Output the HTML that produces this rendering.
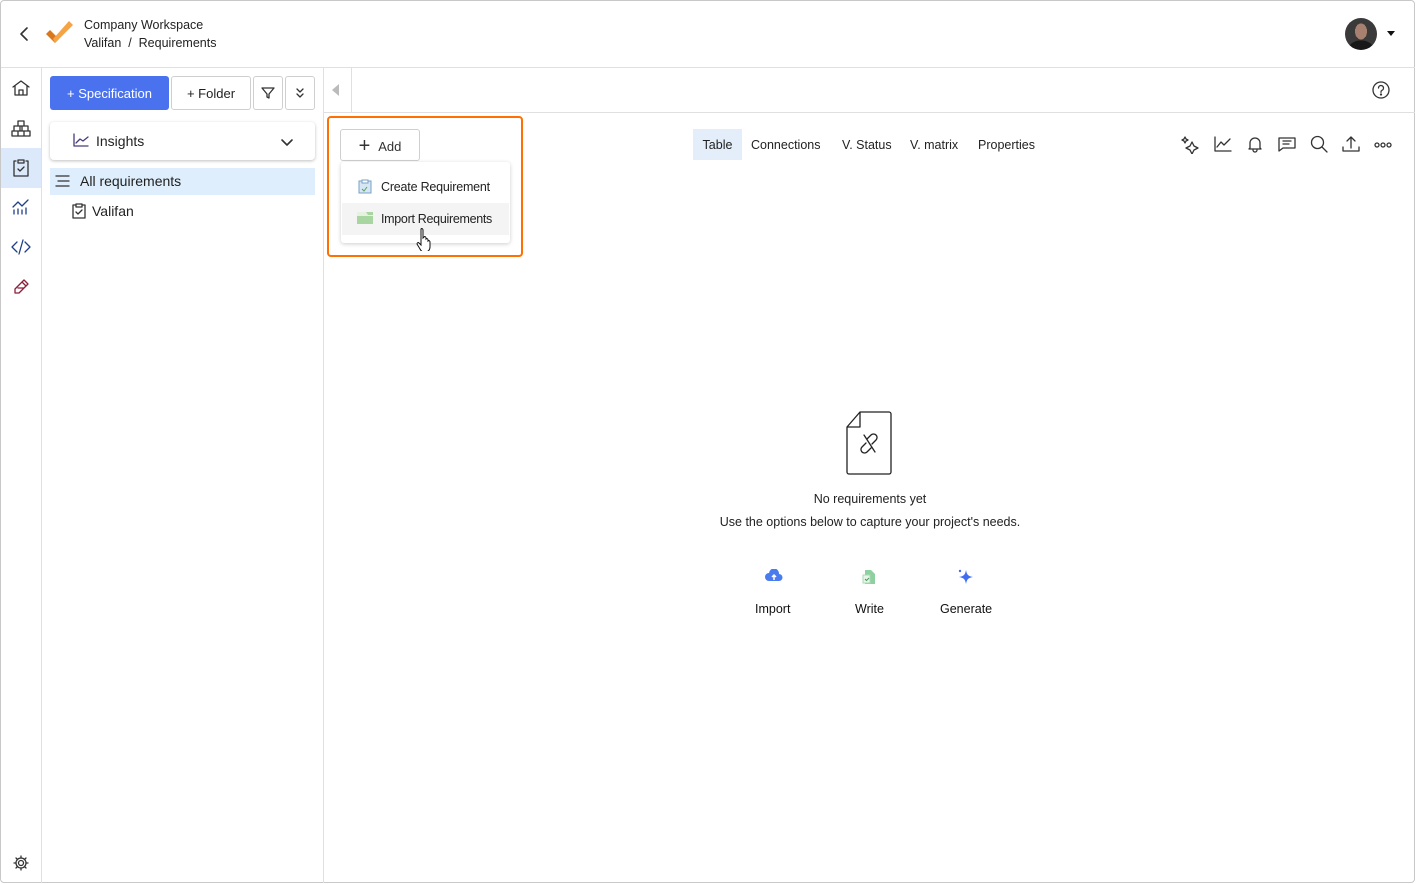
<!DOCTYPE html>
<html><head><style>
*{box-sizing:border-box;margin:0;padding:0}
body{width:1416px;height:884px;overflow:hidden;background:#fff;font-family:"Liberation Sans",sans-serif;color:#1f1f1f;position:relative}
.frame{position:absolute;left:0;top:0;width:1415px;height:883px;border:1px solid #c8c8c8;border-radius:4px}
.a{position:absolute}
.ic{position:absolute;fill:none;stroke:#333;stroke-width:1.3;stroke-linecap:round;stroke-linejoin:round}
.btn{position:absolute;border:1px solid #cfcfcf;border-radius:3px;background:#fff;font-size:13px;display:flex;align-items:center;justify-content:center}
.tab{position:absolute;top:129px;height:31px;font-size:12.5px;line-height:33px;color:#222}
</style></head><body>
<div class="frame"></div>
<svg class="ic" style="left:18px;top:26px" width="14" height="16" viewBox="0 0 14 16"><path d="M9 2L3 8l6 6" stroke-width="1.6"/></svg>
<svg class="a" style="left:44px;top:20px" width="32" height="28" viewBox="0 0 32 28"><path d="M2 14l9 9 4-4-9-9z" fill="#d9771c"/><path d="M11 23L29 5l-4-4L9 19z" fill="#f6a346"/></svg>
<div class="a" style="left:84px;top:18px;font-size:12.5px;color:#222">Company Workspace</div>
<div class="a" style="left:84px;top:36px;font-size:12.5px;color:#222">Valifan &nbsp;/&nbsp; Requirements</div>
<div class="a" style="left:1345px;top:18px;width:32px;height:32px;border-radius:50%;background:radial-gradient(ellipse 6px 8px at 50% 42%,#a88070 0 100%,transparent 100%),radial-gradient(ellipse 12px 8px at 50% 95%,#181818 0 100%,transparent 100%),#3a3a3a"></div>
<div class="a" style="left:1387px;top:31px;width:0;height:0;border-left:4px solid transparent;border-right:4px solid transparent;border-top:5px solid #111"></div>
<div class="a" style="left:1px;top:67px;width:1414px;height:1px;background:#e0e0e0"></div>
<div class="a" style="left:41px;top:68px;width:1px;height:815px;background:#e0e0e0"></div>
<div class="a" style="left:1px;top:148px;width:40px;height:40px;background:#dbe9fb"></div>
<svg class="ic" style="left:11px;top:79px" width="20" height="18" viewBox="0 0 20 18"><path d="M2 8l8-6 8 6M4 7v9h12V7M8 16v-5h4v5"/></svg>
<svg class="ic" style="left:11px;top:119px" width="20" height="18" viewBox="0 0 20 18"><path d="M7 2h6v5H7zM3 7h6v5H3zM11 7h6v5h-6zM1 12h6v5H1zM7 12h6v5H7zM13 12h6v5h-6z"/></svg>
<svg class="ic" style="left:12px;top:158px" width="18" height="20" viewBox="0 0 18 20"><path d="M4 3H2v15h14V3h-2M6 2h6v3H6zM6 11l2 2 4-4"/></svg>
<svg class="ic" style="left:11px;top:198px;stroke:#1f3f8a" width="20" height="18" viewBox="0 0 20 18"><path d="M2 9l5-5 4 4 6-6M3 16v-4M7 16v-5M11 16v-4M15 16v-6"/></svg>
<svg class="ic" style="left:11px;top:238px;stroke:#1f3f8a" width="20" height="18" viewBox="0 0 20 18"><path d="M6 4L1 9l5 5M14 4l5 5-5 5M12 2L8 16"/></svg>
<svg class="ic" style="left:12px;top:278px" width="18" height="20" viewBox="0 0 18 20"><path d="M12 2l4 4-9 9H3v-4zM10 4l4 4M6 10h6" stroke="#8a1f3a"/></svg>
<svg class="ic" style="left:12px;top:854px" width="18" height="18" viewBox="0 0 18 18"><circle cx="9" cy="9" r="2.5"/><path d="M9 2v2M9 14v2M2 9h2M14 9h2M4 4l1.5 1.5M12.5 12.5L14 14M4 14l1.5-1.5M12.5 5.5L14 4"/><circle cx="9" cy="9" r="5"/></svg>
<div class="a" style="left:323px;top:68px;width:1px;height:815px;background:#e0e0e0"></div>
<div class="a" style="left:50px;top:76px;width:119px;height:34px;background:#4a72ee;border-radius:3px;color:#fff;font-size:13px;display:flex;align-items:center;justify-content:center">+ Specification</div>
<div class="btn" style="left:171px;top:76px;width:80px;height:34px">+ Folder</div>
<div class="btn" style="left:253px;top:76px;width:30px;height:34px"><svg class="ic" style="position:static" width="14" height="14" viewBox="0 0 14 14"><path d="M1 2h12L8 8v4L6 11V8z"/></svg></div>
<div class="btn" style="left:285px;top:76px;width:30px;height:34px"><svg class="ic" style="position:static" width="12" height="12" viewBox="0 0 12 12"><path d="M3 2l3 3 3-3M3 7l3 3 3-3"/></svg></div>
<div class="a" style="left:50px;top:122px;width:265px;height:38px;border-radius:4px;box-shadow:0 1px 3px rgba(0,0,0,.25);background:#fff"></div>
<svg class="ic" style="left:73px;top:133px;stroke:#4a3a7a" width="16" height="14" viewBox="0 0 16 14"><path d="M1 1v12h14M3 10l4-4 3 2 5-4"/></svg>
<div class="a" style="left:96px;top:133px;font-size:14px;color:#222">Insights</div>
<svg class="ic" style="left:280px;top:138px" width="14" height="10" viewBox="0 0 14 10"><path d="M2 2l5 5 5-5" stroke-width="1.6"/></svg>
<div class="a" style="left:50px;top:168px;width:265px;height:27px;background:#deeefc"></div>
<svg class="ic" style="left:55px;top:174px" width="16" height="14" viewBox="0 0 16 14"><path d="M1 2h13M3 7h11M1 12h13"/></svg>
<div class="a" style="left:80px;top:173px;font-size:14px">All requirements</div>
<svg class="ic" style="left:72px;top:203px" width="14" height="16" viewBox="0 0 14 16"><path d="M3 2H1v13h12V2h-2M4 1h6v3H4zM4 9l2 2 4-4"/></svg>
<div class="a" style="left:92px;top:203px;font-size:14px">Valifan</div>
<div class="a" style="left:332px;top:84px;width:0;height:0;border-top:6px solid transparent;border-bottom:6px solid transparent;border-right:7px solid #bbb"></div>
<div class="a" style="left:351px;top:68px;width:1px;height:44px;background:#e0e0e0"></div>
<div class="a" style="left:324px;top:112px;width:1091px;height:1px;background:#e0e0e0"></div>
<svg class="ic" style="left:1371px;top:80px" width="20" height="20" viewBox="0 0 20 20"><circle cx="10" cy="10" r="8"/><path d="M7.5 8a2.5 2.5 0 1 1 3.5 2.3c-.7.3-1 .8-1 1.5v.5"/><circle cx="10" cy="14.5" r=".5" fill="#333"/></svg>
<div class="a" style="left:327px;top:116px;width:196px;height:141px;border:2.5px solid #ff7000;border-radius:4px"></div>
<div class="btn" style="left:340px;top:129px;width:80px;height:32px;font-size:13px;color:#333;padding-top:2px"><span style="font-size:20px;font-weight:300;margin-right:8px">+</span>Add</div>
<div class="a" style="left:341px;top:162px;width:169px;height:81px;background:#fff;border-radius:3px;box-shadow:0 1px 4px rgba(0,0,0,.2)"></div>
<div class="a" style="left:342px;top:203px;width:167px;height:32px;background:#f4f4f4"></div>
<svg class="a" style="left:358px;top:179px" width="14" height="15" viewBox="0 0 14 15"><rect x="1" y="2" width="12" height="12" fill="#d7e6f5" stroke="#7aa0c8"/><rect x="4" y="1" width="6" height="3" fill="#fff" stroke="#7aa0c8"/><path d="M4 10l2 2 3-4" stroke="#5aa05a" fill="none"/></svg>
<div class="a" style="left:381px;top:180px;font-size:12.5px;color:#222;letter-spacing:-0.2px">Create Requirement</div>
<svg class="a" style="left:357px;top:212px" width="16" height="12" viewBox="0 0 16 12"><rect x="0" y="0" width="16" height="12" fill="#a8d5a0"/><path d="M0 0h9l2 3h5v1H0z" fill="#e6f1e2"/></svg>
<div class="a" style="left:381px;top:212px;font-size:12.5px;color:#222;letter-spacing:-0.3px">Import Requirements</div>
<svg class="a" style="left:416px;top:227px" width="18" height="24" viewBox="0 0 18 24"><path d="M5 2c1-1 2 0 2 1v8l1-1c1-1 2 0 2 1v1c1-1 2 0 2 1v1c1-1 2 0 2 1v5c0 3-2 5-5 5H8c-2 0-3-1-4-3l-3-5c0-1 1-2 2-1l2 2V3z" fill="#fff" stroke="#111" stroke-width="1"/></svg>
<div class="tab" style="left:693px;width:49px;background:#e4eefb;text-align:center">Table</div>
<div class="tab" style="left:751px">Connections</div>
<div class="tab" style="left:842px">V. Status</div>
<div class="tab" style="left:910px">V. matrix</div>
<div class="tab" style="left:978px">Properties</div>
<svg class="ic" style="left:1181px;top:136px" width="20" height="18" viewBox="0 0 20 18"><path d="M11 6l2 4 4 2-4 2-2 4-2-4-4-2 4-2zM4 1l1 2 2 1-2 1-1 2-1-2-2-1 2-1z"/></svg>
<svg class="ic" style="left:1214px;top:136px" width="18" height="16" viewBox="0 0 18 16"><path d="M1 1v14h16M3 11l4-5 3 3 6-6"/></svg>
<svg class="ic" style="left:1247px;top:135px" width="16" height="18" viewBox="0 0 16 18"><path d="M3 13V8a5 5 0 0 1 10 0v5l1 1H2zM6 15a2 2 0 0 0 4 0"/></svg>
<svg class="ic" style="left:1278px;top:136px" width="18" height="16" viewBox="0 0 18 16"><path d="M1 2h16v10H5l-4 3zM5 5h8M5 8h6"/></svg>
<svg class="ic" style="left:1310px;top:135px" width="18" height="18" viewBox="0 0 18 18"><circle cx="7.5" cy="7.5" r="6"/><path d="M12 12l5 5"/></svg>
<svg class="ic" style="left:1342px;top:135px" width="18" height="18" viewBox="0 0 18 18"><path d="M9 13V2M5 6l4-4 4 4M1 12v4h16v-4"/></svg>
<svg class="ic" style="left:1374px;top:142px" width="18" height="6" viewBox="0 0 18 6"><circle cx="3" cy="3" r="2"/><circle cx="9" cy="3" r="2"/><circle cx="15" cy="3" r="2"/></svg>
<svg class="ic" style="left:845px;top:410px;stroke:#222" width="48" height="66" viewBox="0 0 48 66"><path d="M15 2h29a2 2 0 0 1 2 2v58a2 2 0 0 1-2 2H4a2 2 0 0 1-2-2V17zM2 17h13V2"/><path d="M22 29l4-4a3.5 3.5 0 0 1 5 5l-4 4M26 38l-4 4a3.5 3.5 0 0 1-5-5l4-4M19 25l11 17"/></svg>
<div class="a" style="left:0;width:1740px;top:492px;text-align:center;font-size:12.5px;color:#222">No requirements yet</div>
<div class="a" style="left:0;width:1740px;top:515px;text-align:center;font-size:12.5px;color:#222">Use the options below to capture your project's needs.</div>
<svg class="a" style="left:765px;top:569px" width="18" height="14" viewBox="0 0 18 14"><path d="M4 12a4 4 0 0 1 0-8 5 5 0 0 1 10 1 3.5 3.5 0 0 1 0 7z" fill="#4a7cf0"/><path d="M9 11V6M7 8l2-2 2 2" stroke="#fff" stroke-width="1.5" fill="none"/></svg>
<div class="a" style="left:755px;top:602px;font-size:12.5px;font-weight:500;color:#111">Import</div>
<svg class="a" style="left:862px;top:569px" width="14" height="16" viewBox="0 0 14 16"><path d="M3 1h6l4 4v10H3z" fill="#8fd0a0"/><rect x="1" y="6" width="7" height="8" fill="#e6f5e8" stroke="#aad9b4"/><path d="M3 10l1.5 1.5L7 9" stroke="#4a9a5a" fill="none"/></svg>
<div class="a" style="left:855px;top:602px;font-size:12.5px;font-weight:500;color:#111">Write</div>
<svg class="a" style="left:956px;top:568px" width="20" height="18" viewBox="0 0 20 18"><path d="M10 2c1 5 2 6 7 7-5 1-6 2-7 7-1-5-2-6-7-7 5-1 6-2 7-7z" fill="#3f6ff0"/><circle cx="4" cy="3" r="1.2" fill="#3f6ff0"/></svg>
<div class="a" style="left:940px;top:602px;font-size:12.5px;font-weight:500;color:#111">Generate</div>
</body></html>
